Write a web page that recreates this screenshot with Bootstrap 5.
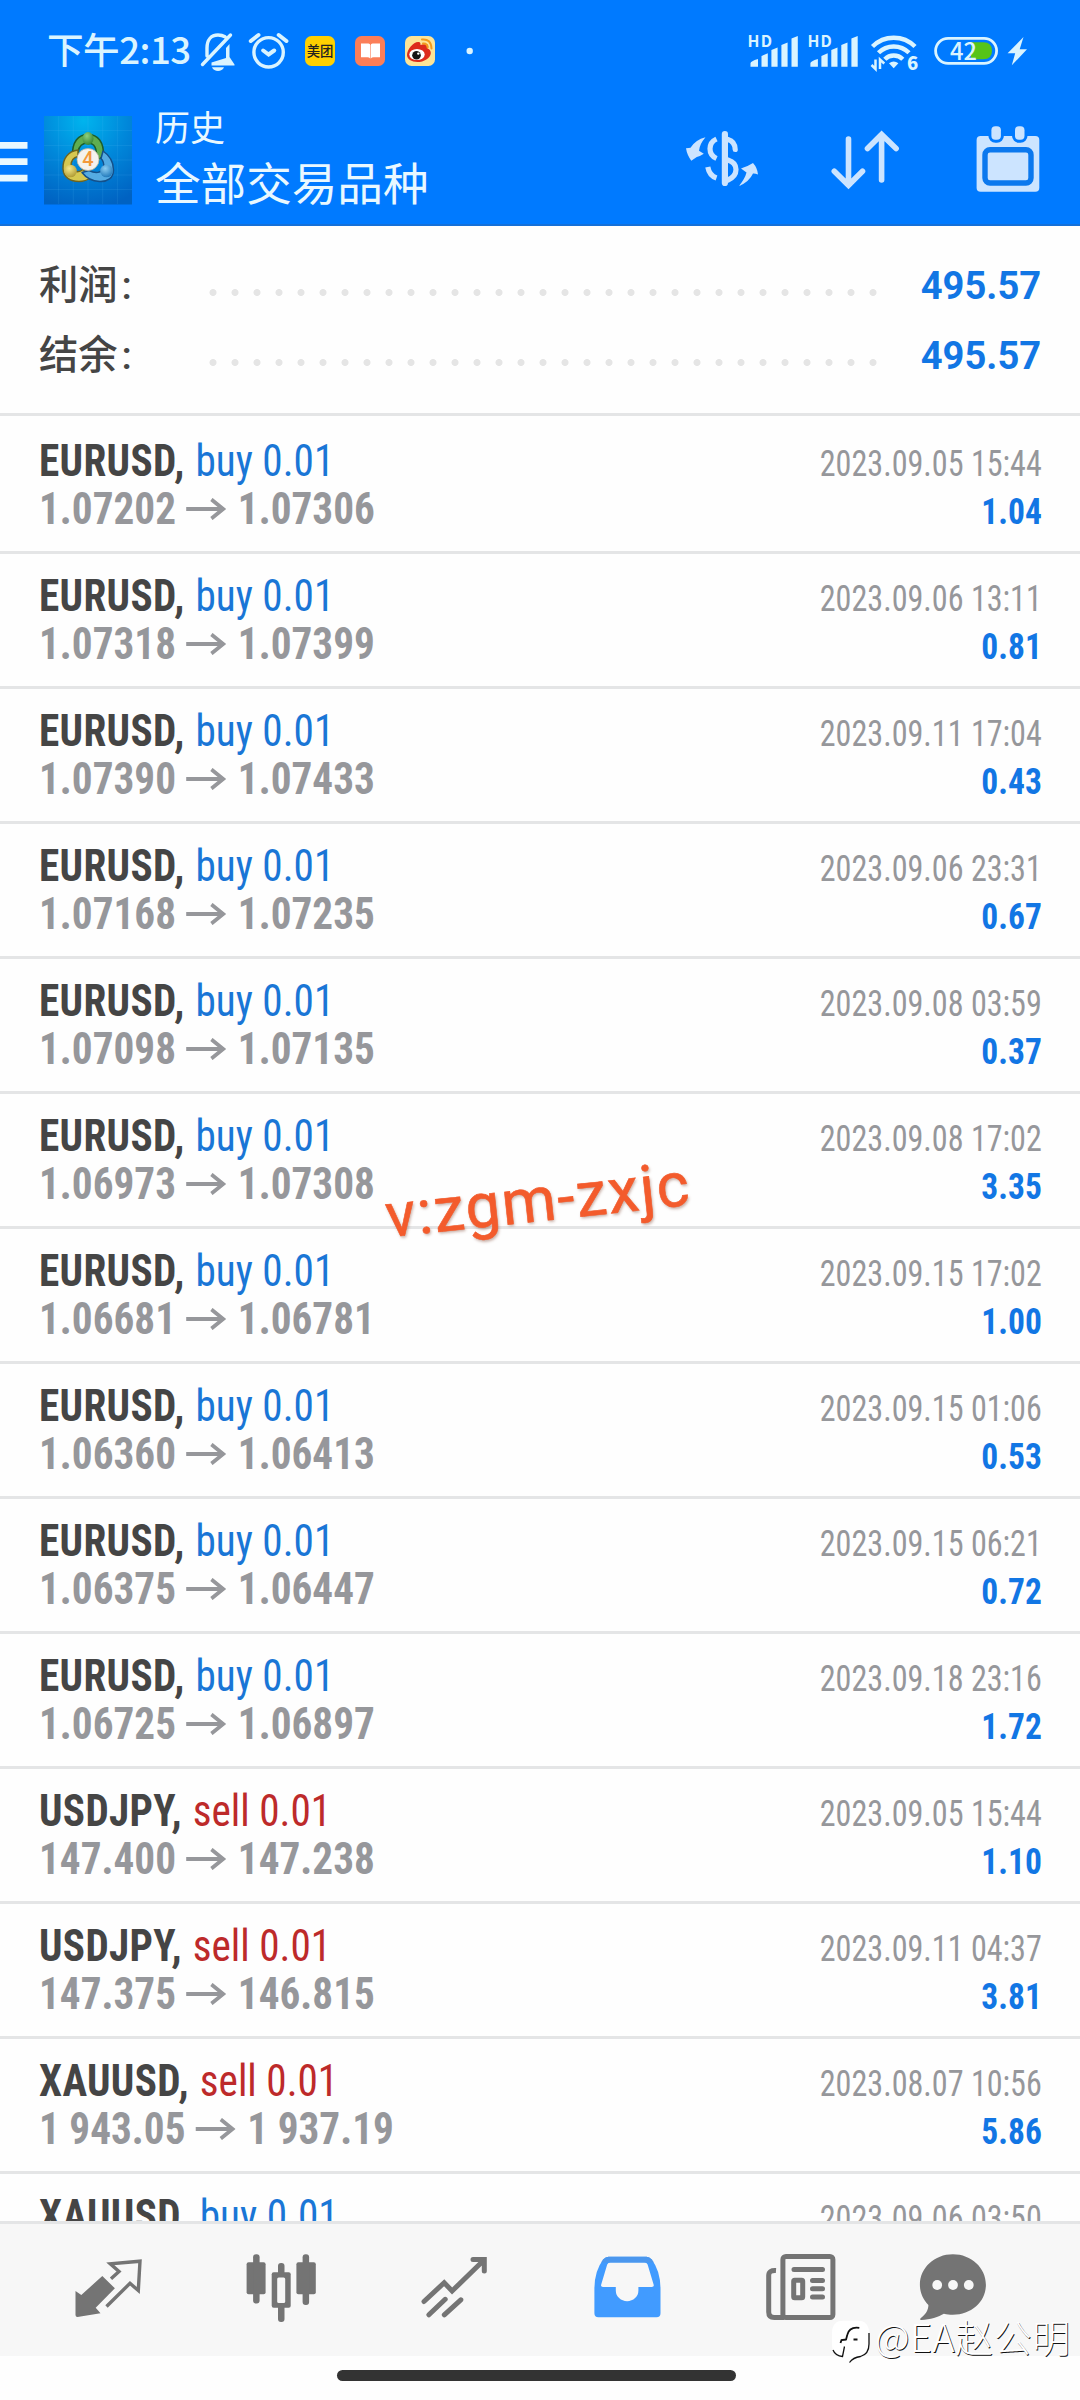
<!DOCTYPE html>
<html lang="zh-CN">
<head>
<meta charset="utf-8">
<meta name="viewport" content="width=device-width, initial-scale=1">
<title>历史</title>
<link href="https://cdn.jsdelivr.net/npm/bootstrap@5.3.0/dist/css/bootstrap.min.css" rel="stylesheet">
<style>
  body { margin: 0; background: #fefefe; color: #454545; font-family: Roboto, "Noto Sans CJK SC", sans-serif; }
  .screen { width: 1080px; height: 2400px; }
  .app-head { height: 226px; background: #007aff; border-bottom: 2px solid #1570d8; color: #e9f8ff; }
  .status-row { height: 100px; padding: 0 50px 0 47px; }
  .clock { font: 500 36.6px/50px "Noto Sans CJK SC", sans-serif; color: #daf4ff; width: 149px; margin-top: 24px; letter-spacing: -.5px; white-space: nowrap; }
  .title-row { height: 124px; }
  .title-row svg, .status-row svg { flex: none; display: block; }
  .head-titles { margin-left: 23px; margin-top: -1px; font-family: "Noto Sans CJK SC", sans-serif; }
  .head-small { font-size: 35px; line-height: 54px; }
  .head-big { font-size: 45.6px; line-height: 56px; white-space: nowrap; }
  .summary { height: 190px; padding: 25px 39px 0 39px; border-bottom: 3px solid #e4e5e6; }
  .sum-line { height: 70px; line-height: 70px; }
  .sum-label { width: 164px; font-size: 39.3px; font-weight: 500; }
  .colon { margin-left: 4px; }
  .leader { width: 682px; height: 7px; margin-top: 12px; margin-left: -1px; background: radial-gradient(circle at 11px 3.5px, #e5e5e5 3.1px, transparent 3.9px) 0 0 / 22px 7px repeat-x; }
  .sum-value { font-size: 39.3px; font-weight: 700; color: #1276e4; transform: scaleX(.97); transform-origin: right; }
  .trades { height: 1805px; }
  .trade { padding: 18px 38px 18px 39px; border-bottom: 3px solid #e4e5e6; font-stretch: 75%; }
  .trade:first-child { padding-top: 21px; }
  .trade-line { height: 48px; line-height: 48px; white-space: pre; }
  .left-part { font-size: 44px; display: inline-block; transform: scaleX(.937); transform-origin: left; }
  .left-part b { letter-spacing: .35px; margin-right: 1.5px; }
  .prices { color: #96979b; font-weight: 700; }
  .prices svg { margin: 0 12px 6px 11px; }
  .right-part { font-size: 37px; display: inline-block; transform: scaleX(.868); transform-origin: right; }
  .stamp { color: #96979b; }
  .gain { color: #1276e4; font-weight: 700; transform: scaleX(.905); }
  .side-buy { color: #1a76d6; }
  .side-sell { color: #bd2a2a; }
  .tabs { height: 135px; background: #f7f7f7; border-top: 3px solid #e4e5e6; }
  .tabs svg { display: block; }
  .home-pill { width: 399px; height: 11px; margin: 14px 0 0 337px; background: #333; border-radius: 6px; }
  .tag-text { left: 387px; top: 1160px; font: 400 62px/80px Roboto, sans-serif; letter-spacing: 1.6px; color: #f35b2c; -webkit-text-stroke: .6px #f35b2c; white-space: nowrap; transform: rotate(-6.1deg); transform-origin: 153px 62px; text-shadow: 1px 2px 3px rgba(120,60,40,.4); }
  .watermark { left: 830px; top: 2310px; color: #fff; }
  .wm-text { font: 300 38px/50px "Noto Sans CJK SC", sans-serif; letter-spacing: .5px; text-shadow: .8px .8px .5px #111; white-space: nowrap; margin: -5px 0 0 4px; }
</style>
<script src="https://cdn.jsdelivr.net/npm/bootstrap@5.3.0/dist/js/bootstrap.bundle.min.js"></script>
</head>
<body>
<div class="screen position-relative overflow-hidden">

<header class="app-head">
  <div class="status-row d-flex align-items-start">
    <div class="clock">下午2:13</div>
    <svg width="286" height="100" viewBox="196 0 286 100" fill="none" stroke="#daf4ff" stroke-width="3.4" stroke-linecap="round">
      <path d="M202.5 64.500 230.500 35M207 56V48c0-8 4-13 11-13 3 0 5 .6 7 1.800" stroke-linejoin="round"/>
      <path d="M226 48 229.500 44V57l5 7.500v1H211.500v-3L226 58Z" fill="#daf4ff" stroke="none"/>
      <path d="M212 67.300h12c-2 5-10 5-12 0Z" fill="#daf4ff" stroke="none"/>
      <circle cx="268.600" cy="52.300" r="14.700"/>
      <path d="M250.800 41 258.500 35M278.700 35l7.700 6M263.200 50.500l5.400 4 5.600-4" stroke-width="4"/>
      <g stroke="none">
        <rect x="305" y="36" width="30" height="30" rx="6.500" fill="#ffd000"/>
        <text x="306.700" y="56.200" font-family="Noto Sans CJK SC" font-weight="500" font-size="13.400" fill="#222">美团</text>
        <rect x="355" y="36" width="30" height="30" rx="6.500" fill="#fb7e58"/>
        <path d="M361 43.500h7.500q1.700 0 1.700 1.500v13.500q-1-1.200-2.700-1.200H361ZM380 43.500h-7.500q-1.700 0-1.700 1.500v13.500q1-1.200 2.700-1.200H380Z" fill="#fff"/>
        <rect x="405" y="36" width="30" height="30" rx="6.500" fill="#fde497"/>
        <path d="M407 55c0-6 7-14 12-13 2 .5 1.500 3 1.500 3s6-2.500 7.500 0c.8 1.500-.5 3.500-.5 3.500s3.500 1 3.300 4.700c-.3 5-7 8.800-13.300 8.800-6 0-10.500-3-10.500-7Z" fill="#dd2a1b"/>
        <ellipse cx="417" cy="54.500" rx="7.700" ry="5.600" fill="#fff"/>
        <circle cx="416.500" cy="55.300" r="4.300" fill="#151515"/><circle cx="418.300" cy="53.600" r="1.200" fill="#fff"/>
        <path d="M422 39.500q9-1 9.500 9M423 43.500q4-.5 4.700 4" stroke="#f29a1d" stroke-width="2" fill="none"/>
        <circle cx="469.700" cy="51" r="3.200" fill="#daf4ff"/>
      </g>
    </svg>
    <svg class="ms-auto" width="286" height="100" viewBox="744 0 286 100" fill="#daf4ff">
      <g id="cell">
        <text x="747.500" y="46.700" font-family="Noto Sans CJK SC" font-weight="700" font-size="15.800" textLength="24.500">HD</text>
        <path d="M750.500 66.700v-3.500q0-2 7.500-4.200v7.700ZM761.500 66.700V56l6.300-2.700v13.400ZM771.400 66.700V50l6.200-2.500v19.200ZM781.400 66.700V45l6.200-2.500v24.200ZM791.500 66.700V38.500l6.300-2.500v30.700Z"/>
      </g>
      <use href="#cell" x="59.900"/>
      <g fill="none" stroke="#daf4ff" stroke-width="4.400">
        <path d="M872.500 46.500a30 30 0 0 1 42.500 0M878.500 52.800a21.500 21.500 0 0 1 30.500 0M884.800 59.300a12.700 12.700 0 0 1 18 0"/>
      </g>
      <path d="M889 63.200q4.700-3.500 9.400 0l-4.700 5Z"/>
      <path d="M875.500 59.500v9.500l-4-4M880 69v-9.500l4.300 4" fill="none" stroke="#daf4ff" stroke-width="2.500"/>
      <text x="907" y="69.700" font-family="Noto Sans CJK SC" font-weight="900" font-size="18.500">6</text>
      <rect x="935.600" y="38.300" width="61" height="25" rx="12.500" fill="none" stroke="#daf4ff" stroke-width="2.800"/>
      <path d="M971 42.300h12.500q8.500 0 8.500 8.500t-8.500 8.500H971Z" fill="#56c418"/>
      <text x="950" y="60" font-family="Noto Sans CJK SC" font-weight="500" font-size="24" textLength="27" lengthAdjust="spacingAndGlyphs">42</text>
      <path d="M1023.500 37 1007.600 53.300h7.600l-3.400 12L1027 49.300h-7.300Z"/>
    </svg>
  </div>
  <div class="title-row d-flex align-items-start">
    <svg width="44" height="124" viewBox="0 100 44 124" fill="#e9f8ff"><path d="M0 142h27.500v6.700H0ZM0 158.200h27.500v6.700H0ZM0 174.800h27.500v6.700H0Z"/></svg>
    <svg width="88" height="124" viewBox="44 100 88 124">
      <defs>
        <radialGradient id="lg" cx=".45" cy=".05" r="1"><stop offset="0" stop-color="#00b4ee"/><stop offset=".5" stop-color="#0087da"/><stop offset="1" stop-color="#0062c2"/></radialGradient>
        <radialGradient id="gg" cx=".4" cy=".3" r=".8"><stop offset="0" stop-color="#8fd07e"/><stop offset="1" stop-color="#2a7d2c"/></radialGradient>
        <radialGradient id="gy" cx=".4" cy=".3" r=".8"><stop offset="0" stop-color="#f5e88a"/><stop offset="1" stop-color="#a8922a"/></radialGradient>
        <radialGradient id="gb" cx=".4" cy=".3" r=".8"><stop offset="0" stop-color="#8ccdf2"/><stop offset="1" stop-color="#146fb4"/></radialGradient>
      </defs>
      <rect x="44" y="116" width="88" height="88.500" fill="url(#lg)"/>
      <path d="M58.600 116v88M73.300 116v88M88 116v88M102.700 116v88M117.400 116v88M44 130.500h88M44 145.500h88M44 160h88M44 175h88M44 189.500h88" stroke="#5cc5f5" stroke-opacity=".13"/>
      <g stroke-linejoin="round" stroke-width="1.500">
        <path d="M72.500 156C72 142 78 134.500 88 134.500S104 142 103.500 156L96 161C98 148 94 143 88 143s-9 3-10 9Z" fill="#5fae50" stroke="#1d5e2a"/>
        <path d="M78 150C68 151 62.500 159 63 169c.5 9 8 12.500 16 12.500 5 0 8-1 12-4l-8-8c-5 4-12 2-12-4 0-5 3-8 7-9Z" fill="#d6c850" stroke="#6e6420"/>
        <path d="M103 151c6 4 10.500 11 10.500 19 0 8-6 12-14 11.500-8-.5-14-4.500-17.500-9l7-2c6 3 13 3 14.500-3 .7-4-.5-7-2.500-9Z" fill="#55abe2" stroke="#14508a"/>
      </g>
      <ellipse cx="88" cy="138.500" rx="5.500" ry="6.500" fill="url(#gg)"/><circle cx="70.500" cy="171" r="6.300" fill="url(#gy)"/><circle cx="106.500" cy="171" r="6.300" fill="url(#gb)"/>
      <circle cx="88" cy="159.500" r="11" fill="#f5f2ee" stroke="#b9b49a" stroke-width=".8"/>
      <text x="82.300" y="166.300" font-family="Roboto" font-weight="500" font-size="20" fill="#f39a3c">4</text>
    </svg>
    <div class="head-titles">
      <div class="head-small">历史</div>
      <div class="head-big">全部交易品种</div>
    </div>
    <svg class="ms-auto" width="400" height="124" viewBox="680 100 400 124" fill="#cce4ff">
      <path d="M686 148.300q3-.2 4.500-.5 5-8 15-10.500-6 7-6.500 13.500l4.800 3q-4 2.700-7 3.200l-5.500 3.700Q687 155 686 148.300Z"/>
      <path d="M758 174.500q-3-1.200-5-1-4 8.500-14 12.500 6-7.500 7.500-13.500l-5.500-4q3-1.500 6.500-2.500l5.500-3Q757.500 168 758 174.500Z"/>
      <g fill="none" stroke="#cce4ff" stroke-width="5.600" stroke-linecap="round">
        <path d="M728 139.500q7 2 7.200 10M728 160q8 2.500 8 9.500t-8 10.500" stroke-width="5.200"/>
        <path d="M724.900 134v49" stroke-width="6.200"/>
        <path d="M716.500 139q-6.500 3-6.500 9.800t6.500 9.700M707.800 167q1.500 8.500 8.700 11" stroke-width="5.200" stroke-linecap="butt"/>
        <path d="M848.500 139v45M834.300 171.200l14.200 14 14-14M881.600 180v-44M867.500 148.500l14.100-14 14.500 14"/>
      </g>
      <rect x="976.600" y="136" width="62.700" height="55.700" rx="4"/>
      <rect x="985" y="149.700" width="46" height="33.300" rx="5" fill="none" stroke="#0b78ee" stroke-width="5.400"/>
      <rect x="991.400" y="126.300" width="9.500" height="13.500" rx="4" stroke="#007aff" stroke-width="6" paint-order="stroke"/>
      <rect x="1015" y="126.300" width="9.500" height="13.500" rx="4" stroke="#007aff" stroke-width="6" paint-order="stroke"/>
    </svg>
  </div>
</header>

<section class="summary">
  <div class="sum-line d-flex align-items-center"><div class="sum-label">利润<span class="colon">:</span></div><div class="leader"></div><div class="sum-value ms-auto">495.57</div></div>
  <div class="sum-line d-flex align-items-center"><div class="sum-label">结余<span class="colon">:</span></div><div class="leader"></div><div class="sum-value ms-auto">495.57</div></div>
</section>

<ul class="trades list-unstyled mb-0 overflow-hidden" id="trades"></ul>

<nav class="tabs">
  <svg width="1080" height="132" viewBox="0 2224 1080 132" fill="#747474">
    <path d="M75.500 2291 81.300 2295 102.300 2276 114.900 2288.300 95.700 2307.700 100.500 2313.300 77.500 2317Q75.500 2317 75.500 2315Z"/>
    <path d="M111 2278.700 119 2271.500 110.300 2263.800 140 2261.200 138.300 2290.500 130 2283.300 106.500 2306.500" fill="none" stroke="#747474" stroke-width="3.400"/>
    <rect x="246.600" y="2262.300" width="19" height="32" rx="2"/><rect x="253.100" y="2254.200" width="6.500" height="49.300" rx="3"/>
    <rect x="296.400" y="2262.300" width="19.400" height="32" rx="2"/><rect x="302.600" y="2254.200" width="6.500" height="50.700" rx="3"/>
    <rect x="278" y="2263" width="6.500" height="59" rx="3"/><rect x="271.700" y="2272.300" width="19" height="35.400" rx="2"/><rect x="277.200" y="2277.500" width="8" height="25.500" rx="1.500" fill="#f7f7f7"/>
    <path d="M424 2301.500 444.200 2282.700 452.100 2291 483.500 2260.500M473 2259.500h11.300V2271M428.900 2314.800l16.300-15.500M444.300 2314.800l16.500-15" fill="none" stroke="#747474" stroke-width="5" stroke-linecap="round"/>
    <path fill-rule="evenodd" fill="#419bff" d="M608.500 2256.700h38q3 0 5 2.500 9 11.500 9 30v24q0 4-4 4H598.400q-4 0-4-4v-24q0-18.500 9-30 2-2.500 5.100-2.500ZM610.500 2262.500q-2.500 0-3.300 2l-6 20q-.8 2.500 1.800 2.500h12.800v3.500a11.300 10.800 0 0 0 22.600 0V2287h13.400q2.600 0 1.800-2.500l-6-20q-.8-2-3.300-2Z"/>
    <path d="M603.400 2259.200q2-2.500 5.100-2.500h38q3 0 5 2.500l2.500 3.300H601Z" fill="#4b97ee"/>
    <g fill="none" stroke="#747474" stroke-width="5">
      <rect x="782.900" y="2256.500" width="50" height="61" rx="3"/>
      <path d="M776 2270.500q-7.300-.5-7.300 5V2312q0 5.500 5.500 5.500H784"/>
      <path d="M794 2269.500h28.500M812.500 2280.500h10M812.500 2288.800h10M812.500 2297h10" stroke-linecap="round"/>
      <rect x="793.700" y="2280.200" width="9" height="17.500" rx="1"/>
    </g>
    <path d="M952.900 2254.200c18.500 0 33 13.500 33 30.500s-14.500 30-33 30c-3.500 0-6-.2-9-1-5 3-14 6-22.500 6.200q-2.500-.3-.5-2c5-4 7.500-8 7.500-13-5.500-5.500-8.500-12.500-8.500-20.200 0-17 14.500-30.500 33-30.500Z"/>
    <g fill="#f7f7f7"><circle cx="937.200" cy="2285" r="4.900"/><circle cx="953" cy="2285" r="4.900"/><circle cx="968.800" cy="2285" r="4.900"/></g>
  </svg>
</nav>
<div class="home-pill"></div>

<div class="tag-text position-absolute">v:zgm-zxjc</div>

<div class="watermark position-absolute d-flex align-items-center">
  <svg width="41" height="56" viewBox="830 2310 41 56">
    <path d="M843 2320.700h15q11 0 11 12.500v12q0 9-8 11.500-7 1.500-11 6l1-6h-8q-11-1-11-12v-11.500q0-12.500 11-12.500Z" fill="#fff"/>
    <path d="M869 2333v11q0 10-8.500 12.500-7.500 1-11 6M833 2350q2.500 6 9.500 6.500l2-10" fill="none" stroke="#111" stroke-width="1.300"/>
    <path d="M859.300 2327.800q-10-1.500-12 7l-1.300 5M846.500 2339.500l-5 .5-1 3M853.500 2339.500h4" fill="none" stroke="#111" stroke-width="1.800"/>
  </svg>
  <div class="wm-text">@EA赵公明</div>
</div>
</div>

<script>
  const rows = [
    ["EURUSD", "buy", "1.07202", "1.07306", "2023.09.05 15:44", "1.04"],
    ["EURUSD", "buy", "1.07318", "1.07399", "2023.09.06 13:11", "0.81"],
    ["EURUSD", "buy", "1.07390", "1.07433", "2023.09.11 17:04", "0.43"],
    ["EURUSD", "buy", "1.07168", "1.07235", "2023.09.06 23:31", "0.67"],
    ["EURUSD", "buy", "1.07098", "1.07135", "2023.09.08 03:59", "0.37"],
    ["EURUSD", "buy", "1.06973", "1.07308", "2023.09.08 17:02", "3.35"],
    ["EURUSD", "buy", "1.06681", "1.06781", "2023.09.15 17:02", "1.00"],
    ["EURUSD", "buy", "1.06360", "1.06413", "2023.09.15 01:06", "0.53"],
    ["EURUSD", "buy", "1.06375", "1.06447", "2023.09.15 06:21", "0.72"],
    ["EURUSD", "buy", "1.06725", "1.06897", "2023.09.18 23:16", "1.72"],
    ["USDJPY", "sell", "147.400", "147.238", "2023.09.05 15:44", "1.10"],
    ["USDJPY", "sell", "147.375", "146.815", "2023.09.11 04:37", "3.81"],
    ["XAUUSD", "sell", "1 943.05", "1 937.19", "2023.08.07 10:56", "5.86"],
    ["XAUUSD", "buy", "", "", "2023.09.06 03:50", ""]
  ];
  const arrow = '<svg width="43" height="22" viewBox="0 0 43 22" fill="none" stroke="#96979b" stroke-width="4"><path d="M0 11h39M27 1.500 39.500 11 27 20.500"/></svg>';
  document.getElementById("trades").innerHTML = rows.map(([sym, side, from, to, time, gain]) => `
    <li class="trade">
      <div class="trade-line d-flex justify-content-between align-items-baseline"><span class="left-part"><b>${sym},</b> <span class="side-${side}">${side} 0.01</span></span><span class="right-part stamp">${time}</span></div>
      <div class="trade-line d-flex justify-content-between align-items-baseline"><span class="left-part prices">${from ? from + arrow + to : ""}</span><span class="right-part gain">${gain}</span></div>
    </li>`).join("");
</script>
</body>
</html>
